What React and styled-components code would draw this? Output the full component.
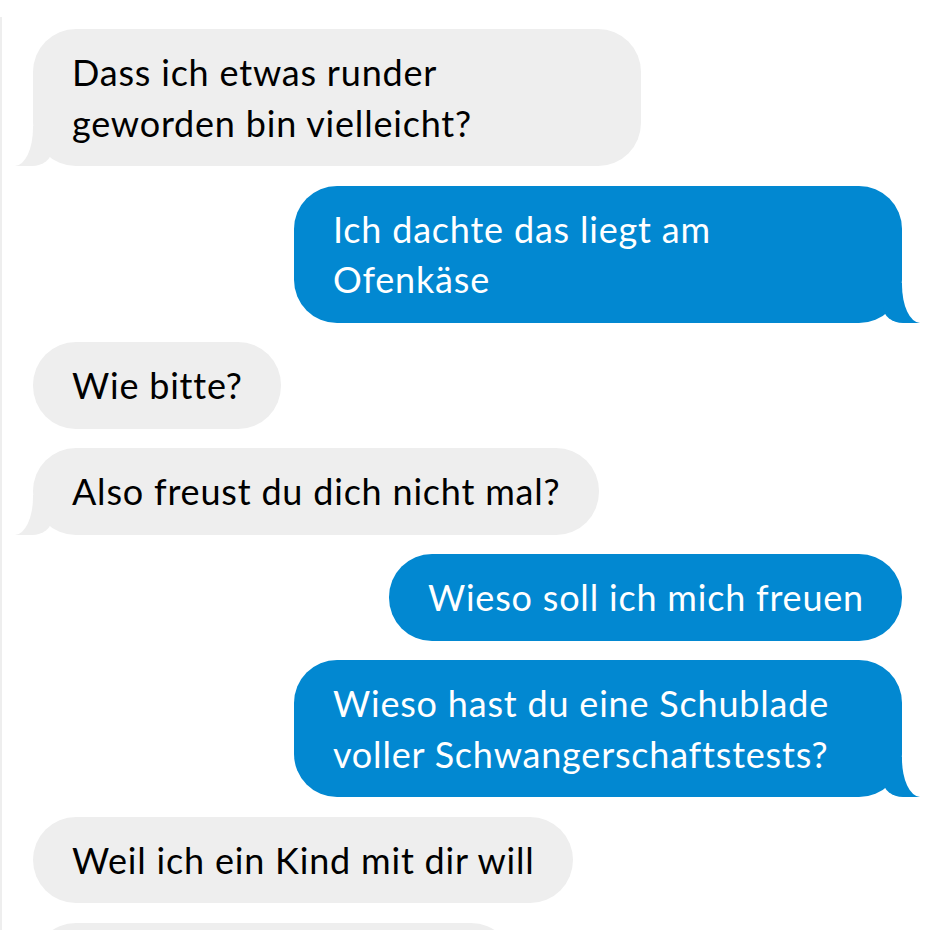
import React from 'react';
import styled, { createGlobalStyle, css } from 'styled-components';

const GlobalStyle = createGlobalStyle`
  html, body {
    margin: 0;
    padding: 0;
    background: #ffffff;
    overflow: hidden;
  }
  body {
    font-family: Lato, "Open Sans", sans-serif;
  }
`;

const GRAY = '#eeeeee';
const BLUE = '#0288d1';

const Thread = styled.div`
  margin-top: 17px;
  border-left: 2px solid #eeeeee;
  padding: 12px 28px 0 31px;
  height: 913px;
  box-sizing: border-box;
  overflow: hidden;
  display: flex;
  flex-direction: column;
  gap: 19.5px;
`;

const tailLeft = css`
  &::before {
    content: '';
    position: absolute;
    bottom: 0;
    left: -19px;
    width: 38px;
    height: 40px;
    background: ${GRAY};
    border-bottom-right-radius: 20px 16px;
  }
  &::after {
    content: '';
    position: absolute;
    bottom: 0;
    left: -30px;
    width: 30px;
    height: 40px;
    background: #ffffff;
    border-bottom-right-radius: 18px 38px;
  }
`;

const tailRight = css`
  &::before {
    content: '';
    position: absolute;
    bottom: 0;
    right: -19px;
    width: 38px;
    height: 40px;
    background: ${BLUE};
    border-bottom-left-radius: 20px 16px;
  }
  &::after {
    content: '';
    position: absolute;
    bottom: 0;
    right: -30px;
    width: 30px;
    height: 40px;
    background: #ffffff;
    border-bottom-left-radius: 18px 38px;
  }
`;

const Bubble = styled.div`
  position: relative;
  flex-shrink: 0;
  box-sizing: border-box;
  max-width: 608px;
  padding: 18px 38px 18px 39px;
  border-radius: 43px;
  font-size: 36px;
  letter-spacing: 0.8px;
  line-height: 50.5px;
  align-self: ${({ $me }) => ($me ? 'flex-end' : 'flex-start')};
  background: ${({ $me }) => ($me ? BLUE : GRAY)};
  color: ${({ $me }) => ($me ? '#ffffff' : '#000000')};
  ${({ $me, $tail }) => $tail && ($me ? tailRight : tailLeft)}
`;

const Text = styled.span`
  position: relative;
  z-index: 1;
`;

const messages = [
  { me: false, tail: true, text: 'Dass ich etwas runder geworden bin vielleicht?' },
  { me: true, tail: true, text: 'Ich dachte das liegt am Ofenkäse' },
  { me: false, tail: false, text: 'Wie bitte?' },
  { me: false, tail: true, text: 'Also freust du dich nicht mal?' },
  { me: true, tail: false, text: 'Wieso soll ich mich freuen' },
  { me: true, tail: true, text: 'Wieso hast du eine Schublade voller Schwangerschaftstests?' },
  { me: false, tail: false, text: 'Weil ich ein Kind mit dir will' },
  { me: false, tail: true, text: 'Ich bin schon schwanger' },
];

const App = () => (
  <>
    <GlobalStyle />
    <Thread>
      {messages.map((m, i) => (
        <Bubble key={i} $me={m.me} $tail={m.tail}>
          <Text>{m.text}</Text>
        </Bubble>
      ))}
    </Thread>
  </>
);

export default App;
